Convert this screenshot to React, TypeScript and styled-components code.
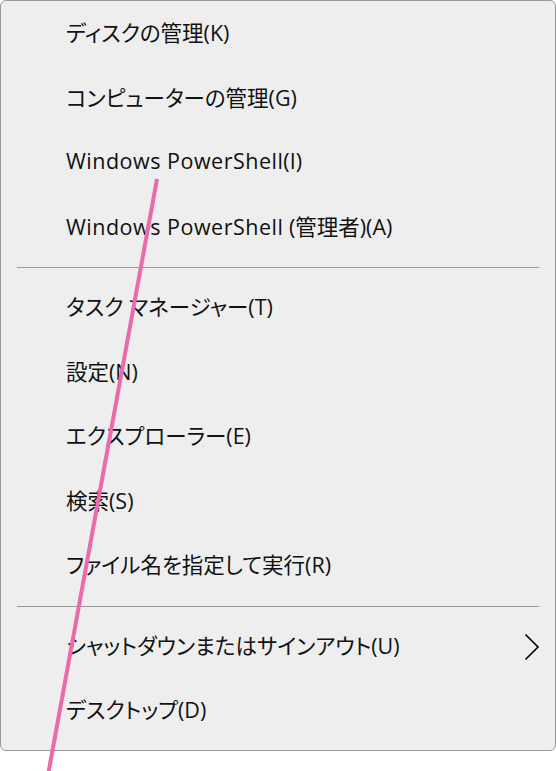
import React from 'react';
import styled, { createGlobalStyle } from 'styled-components';

const GlobalStyle = createGlobalStyle`
  html, body {
    margin: 0;
    padding: 0;
    background: #ffffff;
  }
  body {
    font-family: "Open Sans", "Noto Sans CJK JP", sans-serif;
  }
`;

const Page = styled.div`
  position: relative;
  width: 556px;
  height: 771px;
  overflow: hidden;
`;

const Menu = styled.div`
  box-sizing: border-box;
  width: 556px;
  height: 751px;
  background: #eeeeee;
  border: 1px solid #999999;
  border-radius: 6px;
  display: flex;
  flex-direction: column;
  padding-top: 1px;
`;

const Item = styled.div`
  position: relative;
  box-sizing: border-box;
  height: 64.5px;
  display: flex;
  align-items: center;
  padding-left: 65px;
  padding-bottom: 5px;
  font-size: 21.5px;
  font-feature-settings: "palt";
  color: #111111;
  white-space: nowrap;
`;

const Label = styled.span`
  white-space: pre;
`;

const Latin = styled.span`
  letter-spacing: 0.5px;
`;

const Separator = styled.div`
  height: 1px;
  margin: 7px 16px 8px 16px;
  background: #999999;
`;

const Chevron = styled.svg`
  position: absolute;
  right: 15px;
  top: 50%;
  transform: translateY(-50%);
`;

const Overlay = styled.svg`
  position: absolute;
  left: 0;
  top: 0;
  pointer-events: none;
`;

const groups: { label: string; latin?: string; sub?: boolean }[][] = [
  [
    { label: 'ディスクの管理(K)' },
    { label: 'コンピューターの管理(G)' },
    { label: '(I)', latin: 'Windows PowerShell' },
    { label: ' (管理者)(A)', latin: 'Windows PowerShell' },
  ],
  [
    { label: 'タスク マネージャー(T)' },
    { label: '設定(N)' },
    { label: 'エクスプローラー(E)' },
    { label: '検索(S)' },
    { label: 'ファイル名を指定して実行(R)' },
  ],
  [
    { label: 'シャットダウンまたはサインアウト(U)', sub: true },
    { label: 'デスクトップ(D)' },
  ],
];

export default function App() {
  return (
    <Page>
      <GlobalStyle />
      <Menu>
        {groups.map((group, gi) => (
          <React.Fragment key={gi}>
            {gi > 0 && <Separator />}
            {group.map((item) => (
              <Item key={item.label}>
                <Label>
                  {item.latin && <Latin>{item.latin}</Latin>}
                  {item.label}
                </Label>
                {item.sub && (
                  <Chevron width="16" height="28" viewBox="0 0 16 28">
                    <path d="M1.5 1.5 L14 14 L1.5 26.5" fill="none" stroke="#000" strokeWidth="1.6" />
                  </Chevron>
                )}
              </Item>
            ))}
          </React.Fragment>
        ))}
      </Menu>
      <Overlay width="556" height="771" viewBox="0 0 556 771">
        <line x1="157" y1="179" x2="48" y2="775" stroke="#ea6aab" strokeWidth="4" />
      </Overlay>
    </Page>
  );
}
